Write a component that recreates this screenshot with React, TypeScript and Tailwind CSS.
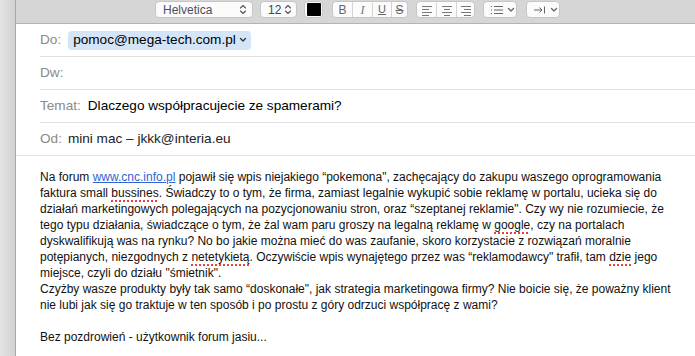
import React from "react";

const UpDown = () => (
  <svg width="8" height="11" viewBox="0 0 8 11" fill="none" stroke="#555" strokeWidth="1.1" strokeLinecap="round" strokeLinejoin="round">
    <path d="M1.5 4 L4 1.5 L6.5 4" />
    <path d="M1.5 7 L4 9.5 L6.5 7" />
  </svg>
);

const Chevron = ({ color = "#666" }: { color?: string }) => (
  <svg width="8" height="6" viewBox="0 0 8 6" fill="none" stroke={color} strokeWidth="1.3" strokeLinecap="round" strokeLinejoin="round">
    <path d="M1.5 1.5 L4 4 L6.5 1.5" />
  </svg>
);

const Align = ({ kind }: { kind: "l" | "c" | "r" }) => {
  const short = kind === "l" ? "M3 6.5h7" : kind === "c" ? "M5 6.5h6" : "M6 6.5h7";
  const short2 = kind === "l" ? "M3 12.5h7" : kind === "c" ? "M5 12.5h6" : "M6 12.5h7";
  return (
    <svg width="16" height="14" viewBox="0 0 16 14" fill="none" stroke="#777" strokeWidth="1">
      <path d="M3 3.5h10" />
      <path d={short} />
      <path d="M3 9.5h10" />
      <path d={short2} />
    </svg>
  );
};

const Btn = ({ children, className = "" }: { children: React.ReactNode; className?: string }) => (
  <div className={`h-[17px] rounded-[4px] border border-[#c6c6c6] bg-[#fbfbfb] flex items-center ${className}`}>{children}</div>
);

const Spell = ({ children }: { children: React.ReactNode }) => (
  <span className="underline decoration-dotted decoration-[#e0443a] decoration-[1.5px] underline-offset-[3px]">{children}</span>
);

export default function App() {
  const lines: React.ReactNode[] = [
    <>
      Na forum <span className="text-[#2f63d6] underline decoration-[#2f63d6]">www.cnc.info.pl</span> pojawił się wpis niejakiego “pokemona", zachęcający do zakupu waszego oprogramowania
    </>,
    <>
      faktura small <Spell>bussines</Spell>. Świadczy to o tym, że firma, zamiast legalnie wykupić sobie reklamę w portalu, ucieka się do
    </>,
    <>działań marketingowych polegających na pozycjonowaniu stron, oraz “szeptanej reklamie". Czy wy nie rozumiecie, że</>,
    <>
      tego typu działania, świadczące o tym, że żal wam paru groszy na legalną reklamę w <Spell>google</Spell>, czy na portalach
    </>,
    <>dyskwalifikują was na rynku? No bo jakie można mieć do was zaufanie, skoro korzystacie z rozwiązań moralnie</>,
    <>
      potępianych, niezgodnych z <Spell>netetykietą</Spell>. Oczywiście wpis wynajętego przez was “reklamodawcy" trafił, tam <Spell>dzie</Spell> jego
    </>,
    <>miejsce, czyli do działu "śmietnik".</>,
    <>Czyżby wasze produkty były tak samo “doskonałe", jak strategia marketingowa firmy? Nie boicie się, że poważny klient</>,
    <>nie lubi jak się go traktuje w ten sposób i po prostu z góry odrzuci współpracę z wami?</>,
    <>&nbsp;</>,
    <>Bez pozdrowień - użytkownik forum jasiu...</>,
  ];

  return (
    <div className="w-[695px] h-[356px] overflow-hidden bg-white flex text-black" style={{ fontFamily: '"Liberation Sans", Arial, sans-serif' }}>
      <div className="w-[16px] h-full shrink-0 bg-gradient-to-r from-[#e4e4e4] to-[#d2d2d2] border-r border-[#a9a9a9]" />
      <div className="flex-1 flex flex-col min-w-0">
        {/* toolbar */}
        <div className="h-[24px] shrink-0 bg-[#d6d6d6] border-b border-[#b4b4b4] flex items-start pt-[1px] pl-[139px]">
          <Btn className="w-[98px] pl-[7px] pr-[5px] justify-between">
            <span className="text-[12px] text-[#4d4d66] leading-none">Helvetica</span>
            <UpDown />
          </Btn>
          <Btn className="ml-[7px] w-[37px] pl-[7px] pr-[4px] justify-between">
            <span className="text-[12px] text-[#444] leading-none">12</span>
            <UpDown />
          </Btn>
          <Btn className="ml-[7px] w-[19px] justify-center">
            <div className="w-[14px] h-[13px] bg-black rounded-[1px]" />
          </Btn>
          <Btn className="ml-[9px] w-[76px]">
            <div className="w-[19px] h-full flex items-center justify-center text-[12px] text-[#666]">B</div>
            <div className="w-px h-full bg-[#d4d4d4]" />
            <div className="w-[19px] h-full flex items-center justify-center text-[12px] text-[#777] italic" style={{ fontFamily: '"Liberation Serif", serif' }}>I</div>
            <div className="w-px h-full bg-[#d4d4d4]" />
            <div className="w-[18px] h-full flex items-center justify-center text-[11px] text-[#666] underline">U</div>
            <div className="w-px h-full bg-[#d4d4d4]" />
            <div className="flex-1 h-full flex items-center justify-center text-[12px] text-[#666] line-through">S</div>
          </Btn>
          <Btn className="ml-[8px] w-[59px]">
            <div className="w-[19px] h-full flex items-center justify-center"><Align kind="l" /></div>
            <div className="w-px h-full bg-[#d4d4d4]" />
            <div className="w-[19px] h-full flex items-center justify-center"><Align kind="c" /></div>
            <div className="w-px h-full bg-[#d4d4d4]" />
            <div className="flex-1 h-full flex items-center justify-center"><Align kind="r" /></div>
          </Btn>
          <Btn className="ml-[8px] w-[34px] pl-[6px] gap-[3px]">
            <svg width="14" height="12" viewBox="0 0 14 12" fill="none" stroke="#666" strokeWidth="1">
              <path d="M1 2.5h1M1 6h1M1 9.5h1" />
              <path d="M4 2.5h9M4 6h9M4 9.5h9" />
            </svg>
            <Chevron />
          </Btn>
          <Btn className="ml-[9px] w-[34px] pl-[6px] gap-[4px]">
            <svg width="13" height="10" viewBox="0 0 13 10" fill="none" stroke="#666" strokeWidth="1">
              <path d="M1 5h8M6.5 2.5L9 5L6.5 7.5" />
              <path d="M11.5 1.5v7" />
            </svg>
            <Chevron />
          </Btn>
        </div>

        {/* header rows */}
        <div className="pl-[24px] text-[13.6px]">
          <div className="h-[33px] border-b border-[#e1e1e1] flex items-center">
            <span className="text-[#8a8a8a]">Do:</span>
            <div className="ml-[7px] h-[19px] rounded-[4px] bg-[#d5e5f8] flex items-center pl-[5px] pr-[4px] gap-[3px]">
              <span>pomoc@mega-tech.com.pl</span>
              <Chevron color="#333" />
            </div>
          </div>
          <div className="h-[33px] border-b border-[#e1e1e1] flex items-center">
            <span className="text-[#8a8a8a]">Dw:</span>
          </div>
          <div className="h-[33px] border-b border-[#e1e1e1] flex items-center">
            <span className="text-[#8a8a8a] mr-[1px]">Temat:</span>
            <span className="ml-[6px]">Dlaczego współpracujecie ze spamerami?</span>
          </div>
        </div>
        <div className="h-[33px] border-b border-[#e1e1e1] flex items-center pl-[24px] text-[13.6px]">
          <span className="text-[#8a8a8a]">Od:</span>
          <span className="ml-[6px] text-[#222]">mini mac – jkkk@interia.eu</span>
        </div>

        {/* body */}
        <div className="pl-[24px] pt-[13px] text-[12px] leading-[16px] text-[#111]">
          {lines.map((l, i) => (
            <div key={i} className="whitespace-nowrap">{l}</div>
          ))}
        </div>
      </div>
    </div>
  );
}
